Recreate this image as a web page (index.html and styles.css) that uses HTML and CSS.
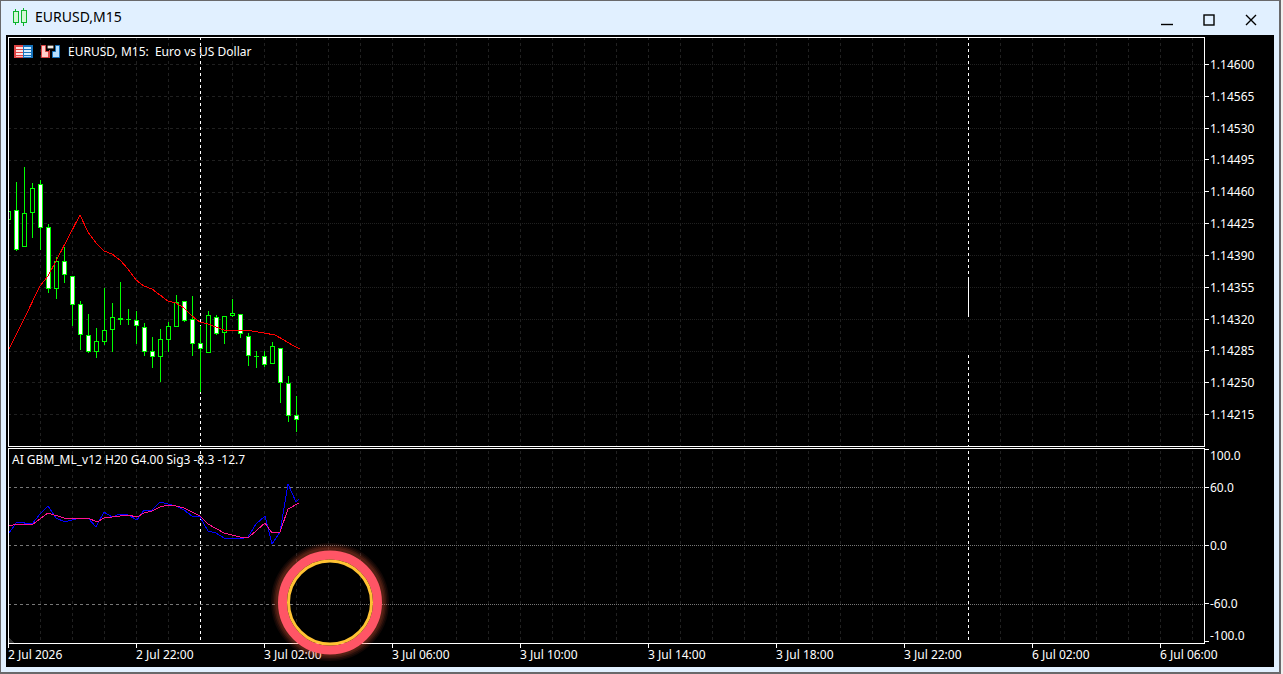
FILE: index.html
```html
<!DOCTYPE html>
<html lang="en">
<head>
<meta charset="utf-8">
<title>EURUSD,M15</title>
<link rel="stylesheet" href="styles.css">
</head>
<body>
<main class="window">
  <header class="titlebar">
    <svg class="app-icon" width="16" height="18" viewBox="0 0 16 18" aria-hidden="true">
      <path d="M3.500 1v16M11.500 0v18" stroke="#0cb52c" fill="none"/>
      <rect x="1.500" y="3.500" width="5" height="11" fill="#d3f8d6" stroke="#0cb52c"/>
      <rect x="9.500" y="2.500" width="5" height="12" fill="#d3f8d6" stroke="#0cb52c"/>
    </svg>
    <h1 class="title">EURUSD,M15</h1>
    <div class="controls">
      <button class="control" type="button" aria-label="Minimize"><svg width="12" height="12"><path d="M0 10.500h12"/></svg></button>
      <button class="control" type="button" aria-label="Maximize"><svg width="12" height="12"><rect x="1" y="1" width="10" height="10"/></svg></button>
      <button class="control" type="button" aria-label="Close"><svg width="12" height="12"><path d="M1 1l10 10M11 1L1 11"/></svg></button>
    </div>
  </header>

  <section class="chart">
    <div class="pane">
      <svg class="plot" aria-hidden="true">
        <defs>
          <pattern id="columns" x="31" y="-1" width="32" height="6" patternUnits="userSpaceOnUse">
            <rect width="1" height="3" class="grid-fill"/>
          </pattern>
        </defs>
        <rect width="100%" height="100%" fill="url(#columns)"/>
        <g id="price-rows"></g>
        <g transform="translate(-9 -38)">
          <path class="day" d="M200.500 37V446M968.500 37V277M968.500 355V446"/>
          <path class="solid" d="M968.500 277V317"/>
          <g id="candles"></g>
          <polyline class="average" points="9,349 24,319 40,286 48,276 56,261 80,215 88,232 96,243 104,251 112,254 120,260 128,269 136,280 144,286 152,289 160,295 168,301 176,303 184,308 192,316 200,322 208,324 216,327 224,330 252,331 264,333 275,335 284,340 292,345 300,349"/>
        </g>
      </svg>
      <div class="caption">
        <svg width="19" height="13" aria-hidden="true">
          <rect width="10" height="13" fill="#e04545"/><rect x="9" width="10" height="13" fill="#1673bd"/>
          <path d="M2 3h7M2 6h7M2 9h7" stroke="#ffe1df" stroke-width="2"/>
          <path d="M10 3h7M10 6h7M10 9h7" stroke="#d5edff" stroke-width="2"/>
          <path d="M2 11.500h7" stroke="#ffb9b5"/><path d="M10 11.500h7" stroke="#a9d8ff"/>
        </svg>
        <svg width="19" height="13" aria-hidden="true">
          <path d="M.5 .5h4v6h3v6h-7z" fill="#ffcfca" stroke="#dc4444"/>
          <path d="M18.500 .5h-4v6h-3v6h7z" fill="#b8e0ff" stroke="#1673bd"/>
          <path d="M8.500 5v8" stroke="#dc4444"/>
          <rect x="6.500" y="0.500" width="6" height="3" rx="1" fill="#eeeae5" stroke="#605850"/>
        </svg>
        <span class="symbol">EURUSD, M15:&nbsp; Euro vs US Dollar</span>
      </div>
    </div>
    <div class="scale price-scale">
      <span>1.14600</span><span>1.14565</span><span>1.14530</span><span>1.14495</span><span>1.14460</span><span>1.14425</span><span>1.14390</span><span>1.14355</span><span>1.14320</span><span>1.14285</span><span>1.14250</span><span>1.14215</span>
    </div>

    <div class="pane">
      <svg class="plot" aria-hidden="true">
        <defs>
          <pattern id="columns-low" x="31" y="2" width="32" height="6" patternUnits="userSpaceOnUse">
            <rect width="1" height="3" class="grid-fill"/>
          </pattern>
        </defs>
        <rect width="100%" height="100%" fill="url(#columns-low)"/>
        <g id="level-rows"></g>
        <g transform="translate(-9 -449)">
          <path class="day" d="M200.500 451V641M968.500 451V641"/>
          <path d="M9 638l5 5H9z" fill="#333"/>
          <polyline class="fast" points="9,533 17,522 32,524 40,514 48,506 56,518 65,522 72,520 80,518 88,518 96,527 104,512 112,517 120,514 128,515 137,520 144,510 152,510 160,502 168,504 176,506 184,510 192,516 200,517 208,531 216,533 224,538 240,539 248,537 256,524 265,516 272,544 280,532 288,484 296,502 299,499"/>
          <polyline class="slow" points="9,526 17,524 33,524 48,513 64,518 70,519 88,518 97,522 104,518 120,516 128,515 137,517 144,513 152,511 160,507 168,505 176,506 184,508 192,512 200,516 208,524 224,533 232,535 240,537 249,537 265,523 272,533 280,532 288,509 299,503"/>
        </g>
      </svg>
      <div class="indicator">AI GBM_ML_v12 H20 G4.00 Sig3 -8.3 -12.7</div>
    </div>
    <div class="scale level-scale">
      <span class="top">100.0</span><span>60.0</span><span>0.0</span><span>-60.0</span><span class="bottom">-100.0</span>
    </div>

    <div class="times">
      <span>2 Jul 2026</span><span>2 Jul 22:00</span><span>3 Jul 02:00</span><span>3 Jul 06:00</span><span>3 Jul 10:00</span><span>3 Jul 14:00</span><span>3 Jul 18:00</span><span>3 Jul 22:00</span><span>6 Jul 02:00</span><span>6 Jul 06:00</span>
    </div>

    <svg class="ring" width="120" height="120" aria-hidden="true">
      <g fill="none" stroke="#ff6040">
        <circle cx="60" cy="60" r="55" stroke-width="8" opacity=".07"/>
        <circle cx="60" cy="60" r="54" stroke-width="7" opacity=".08"/>
        <circle cx="60" cy="60" r="53" stroke-width="6" opacity=".12"/>
        <circle cx="60" cy="60" r="52" stroke-width="5" opacity=".12"/>
      </g>
      <circle cx="60" cy="60.500" r="47.500" fill="none" stroke="#ff5566" stroke-width="9"/>
      <circle cx="60" cy="60.500" r="41.500" fill="none" stroke="#ffc233" stroke-width="3"/>
    </svg>
  </section>
</main>
<script src="chart.js"></script>
</body>
</html>
```
FILE: styles.css
```css
* {
  box-sizing: border-box;
}

body {
  margin: 0;
  padding-right: 2px;
  background: #f0f0f0;
  font-family: "Noto Sans", "Open Sans", sans-serif;
  font-size: 12px;
}

.window {
  display: flex;
  flex-direction: column;
  height: 100vh;
  min-height: 480px;
  border: solid #69696b;
  border-width: 1px 2px 2px 1px;
  background: #e1f0ff;
}

.titlebar {
  display: flex;
  align-items: center;
  height: 34px;
  padding: 0 7px 2px 11px;
  color: #000;
}

.title {
  flex: 1;
  margin: 0 0 0 7px;
  font-size: 14px;
  font-weight: 400;
  line-height: 20px;
}

.controls {
  display: flex;
  padding-top: 6px;
}

.control {
  display: grid;
  place-items: center;
  width: 42px;
  height: 26px;
  padding: 0;
  border: 0;
  background: none;
}

.control svg {
  fill: none;
  stroke: #000;
  stroke-width: 1.4;
}

.chart {
  position: relative;
  flex: 1;
  display: grid;
  grid-template-columns: minmax(0, 1fr) 69px;
  grid-template-rows: 410fr 1px 196fr 23px;
  min-height: 0;
  margin: 0 5px 5px;
  padding: 2px 0 0 2px;
  background: #000;
  color: #fff;
  line-height: 16px;
}

.pane {
  position: relative;
  grid-column: 1;
  border: 1px solid #fff;
  overflow: hidden;
}

.level-scale,
.price-scale + .pane {
  grid-row: 3;
}

.plot {
  position: absolute;
  inset: 0;
  width: 100%;
  height: 100%;
  shape-rendering: crispEdges;
}

.plot polyline,
.plot path {
  stroke-width: 1;
}

.plot polyline {
  fill: none;
}

.grid-fill {
  fill: #202020;
}

.row {
  stroke: #202020;
}

.row.level {
  stroke: #777;
}

.row.past {
  stroke-dasharray: 3 3;
}

.row.future {
  stroke-dasharray: 1 1;
}

.day {
  stroke: #fff;
  stroke-dasharray: 3 3;
}

.solid {
  stroke: #fff;
}

.wick {
  fill: #0f0;
}

.body {
  fill: #fff;
  stroke: #0f0;
}

.body.up {
  fill: #000;
}

.average {
  stroke: #f00;
}

.fast {
  stroke: #00f;
}

.slow {
  stroke: #ff1493;
}

.caption {
  position: relative;
  display: flex;
  align-items: center;
  gap: 8px;
  padding: 5px 0 0 5px;
}

.symbol {
  padding-top: 1px;
}

.indicator {
  position: relative;
  padding: 3px 0 0 3px;
}

.scale span {
  position: relative;
  padding-left: 5px;
}

.scale span::before {
  content: "";
  position: absolute;
  top: calc(50% - 1px);
  left: 0;
  width: 4px;
  height: 1px;
  background: #fff;
}

.scale .top::before {
  top: 1px;
}

.scale .bottom::before {
  top: auto;
  bottom: 2px;
}

.price-scale {
  display: flex;
  flex-direction: column;
  padding: 12px 0 16px;
}

.price-scale span {
  flex: 1;
  display: flex;
  align-items: center;
}

.level-scale {
  display: flex;
  flex-direction: column;
  justify-content: space-between;
}

.level-scale span:nth-child(2) {
  margin: 0 0 26px;
}

.level-scale span:nth-child(4) {
  margin: 26px 0 0;
}

.times {
  grid-column: 1 / 3;
  grid-row: 4;
  display: flex;
  overflow: hidden;
}

.times span {
  position: relative;
  flex: 0 0 128px;
  padding-top: 3px;
}

.times span::before {
  content: "";
  position: absolute;
  top: 0;
  left: 0;
  width: 1px;
  height: 4px;
  background: #fff;
}

.ring {
  position: absolute;
  left: 264px;
  top: 507px;
}
```
FILE: chart.js
```js
const SVG = "http://www.w3.org/2000/svg";

function add(parent, tag, attributes) {
  const node = document.createElementNS(SVG, tag);
  for (const key in attributes) node.setAttribute(key, attributes[key]);
  parent.appendChild(node);
}

// high, low, body top, body bottom, rising
const bars = [
  [211, 219, 211, 219, 1], [182, 250, 210, 249, 0], [167, 246, 213, 246, 1], [183, 237, 188, 212, 1],
  [180, 249, 184, 227, 0], [224, 292, 227, 288, 0], [257, 298, 261, 288, 1], [247, 282, 261, 274, 0],
  [276, 325, 276, 304, 0], [301, 349, 304, 334, 0], [314, 352, 335, 351, 0], [328, 357, 341, 351, 1],
  [288, 344, 330, 341, 1], [303, 351, 317, 329, 1], [282, 324, 318, 319, 0], [309, 324, 319, 319, 0],
  [311, 343, 320, 325, 0], [323, 355, 327, 351, 0], [337, 367, 351, 356, 0], [329, 381, 339, 356, 1],
  [322, 351, 326, 339, 1], [295, 326, 302, 326, 1], [301, 321, 301, 320, 0], [296, 355, 319, 343, 0],
  [326, 391, 343, 348, 0], [311, 352, 315, 352, 1], [315, 334, 317, 333, 0], [316, 343, 316, 332, 1],
  [299, 316, 313, 315, 1], [314, 337, 314, 333, 0], [333, 365, 336, 355, 0], [351, 367, 356, 356, 0],
  [351, 366, 356, 364, 0], [342, 363, 346, 363, 1], [348, 402, 348, 382, 0], [376, 421, 383, 415, 0],
  [396, 431, 415, 419, 0]
];

const candles = document.getElementById("candles");
bars.forEach(([high, low, top, bottom, up], i) => {
  const x = 8 + i * 8;
  add(candles, "rect", { class: "wick", x, y: high, width: 1, height: low - high + 1 });
  if (bottom - top < 2) {
    add(candles, "rect", { class: "wick", x: x - 2, y: top, width: 5, height: bottom - top + 1 });
  } else {
    add(candles, "rect", { class: up ? "body up" : "body", x: x - 1.5, y: top + 0.5, width: 4, height: bottom - top });
  }
});

function rows(id, values, name) {
  const group = document.getElementById(id);
  for (const y of values) {
    add(group, "line", { class: name + " past", x1: -1, x2: 291, y1: y + 0.5, y2: y + 0.5 });
    add(group, "line", { class: name + " future", x1: 291, x2: "100%", y1: y + 0.5, y2: y + 0.5 });
  }
}

rows("price-rows", [26, 58, 90, 122, 154, 185, 217, 249, 281, 313, 344, 376], "row");
rows("level-rows", [38, 96, 155], "row level");
```
